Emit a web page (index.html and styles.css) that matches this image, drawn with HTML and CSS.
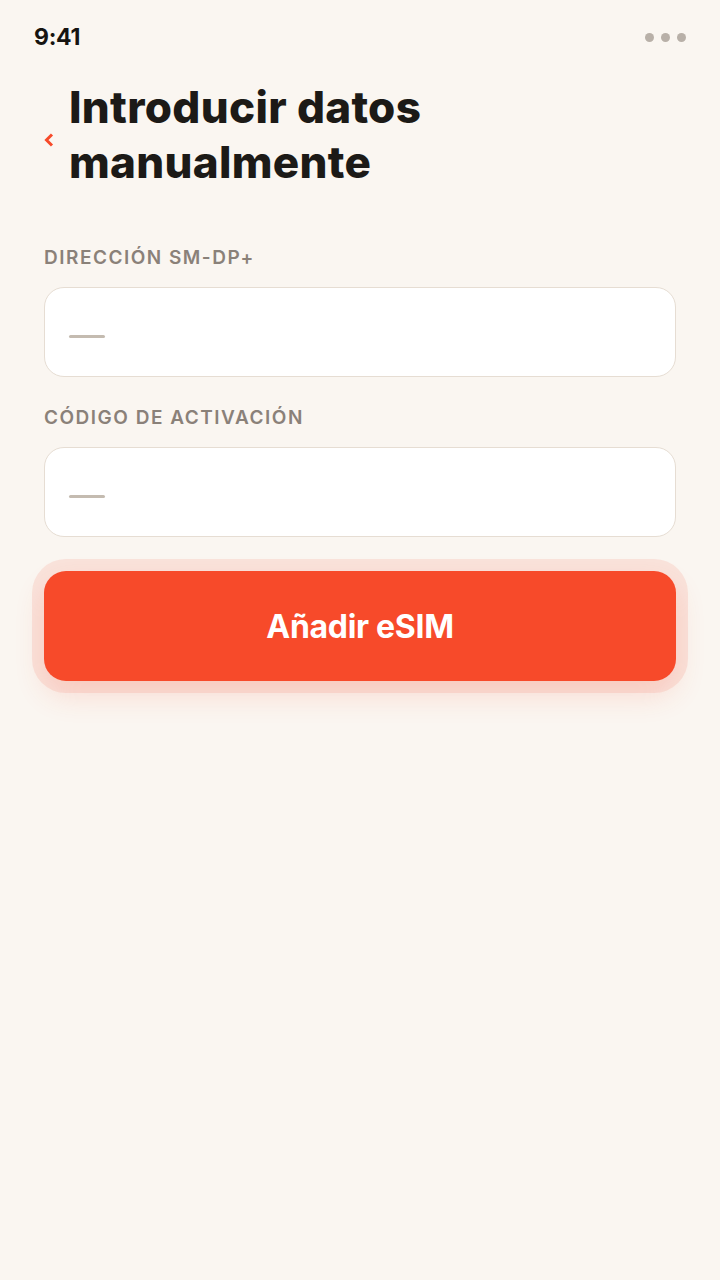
FILE: index.html
```html
<!DOCTYPE html>
<html lang="es">
<head>
<meta charset="utf-8">
<title>Introducir datos manualmente</title>
<link rel="stylesheet" href="styles.css">
</head>
<body>
<div class="screen">
  <div class="status">
    <span class="time">9:41</span>
    <span class="dots"><i></i><i></i><i></i></span>
  </div>
  <header class="header">
    <svg class="back" width="10" height="14" viewBox="0 0 10 14" aria-hidden="true"><path d="M8 1.5 L2.5 7 L8 12.5" fill="none" stroke="#f74a2a" stroke-width="3" stroke-linecap="butt" stroke-linejoin="miter"/></svg>
    <h1 class="title">Introducir datos manualmente</h1>
  </header>
  <form class="form">
    <label class="label">DIRECCIÓN SM-DP+</label>
    <div class="input"><span class="dash"></span></div>
    <label class="label">CÓDIGO DE ACTIVACIÓN</label>
    <div class="input last"><span class="dash"></span></div>
    <button type="button" class="btn">Añadir eSIM</button>
  </form>
</div>
</body>
</html>
```
FILE: styles.css
```css
* { box-sizing: border-box; }
html, body { margin: 0; padding: 0; }
body {
  background: #faf6f1;
  font-family: Inter, "Noto Sans", "Liberation Sans", sans-serif;
  color: #1c1a17;
}
.screen {
  width: 720px;
  min-height: 1280px;
  padding: 0 44px;
}
.status {
  height: 74px;
  display: flex;
  align-items: center;
  justify-content: space-between;
  margin: 0 -10px;
}
.time {
  font-size: 23px;
  font-weight: 700;
  letter-spacing: -0.3px;
  color: #161411;
}
.dots { display: flex; gap: 7px; }
.dots i {
  width: 9px; height: 9px; border-radius: 50%;
  background: #b8b0a8; display: block;
}
.header {
  display: flex;
  align-items: center;
  gap: 15px;
  margin-top: 6px;
}
.back { flex: none; margin-top: 9px; }
.title {
  margin: 0;
  font-size: 44px;
  line-height: 55px;
  font-weight: 800;
  letter-spacing: 0.3px;
  width: 460px;
  color: #1c1a17;
}
.form {
  display: flex;
  flex-direction: column;
  margin-top: 56px;
}
.label {
  font-size: 19px;
  font-weight: 600;
  letter-spacing: 1.5px;
  color: #8a8179;
  line-height: 24px;
  margin-bottom: 17px;
}
.input {
  height: 90px;
  background: #fff;
  border: 1px solid #e6ddd3;
  border-radius: 20px;
  display: flex;
  align-items: center;
  padding-left: 24px;
  margin-bottom: 29px;
}
.input.last { margin-bottom: 34px; }
.dash {
  width: 36px; height: 3px; border-radius: 2px;
  background: #c4bbb0; display: block;
  margin-top: 8px;
}
.btn {
  height: 110px;
  border: none;
  border-radius: 22px;
  background: #f74a2a;
  color: #fff;
  font-family: inherit;
  font-size: 32px;
  font-weight: 700;
  letter-spacing: -0.3px;
  box-shadow: 0 0 0 12px rgba(247, 74, 42, 0.11), 0 14px 30px rgba(247, 74, 42, 0.16);
}
```
